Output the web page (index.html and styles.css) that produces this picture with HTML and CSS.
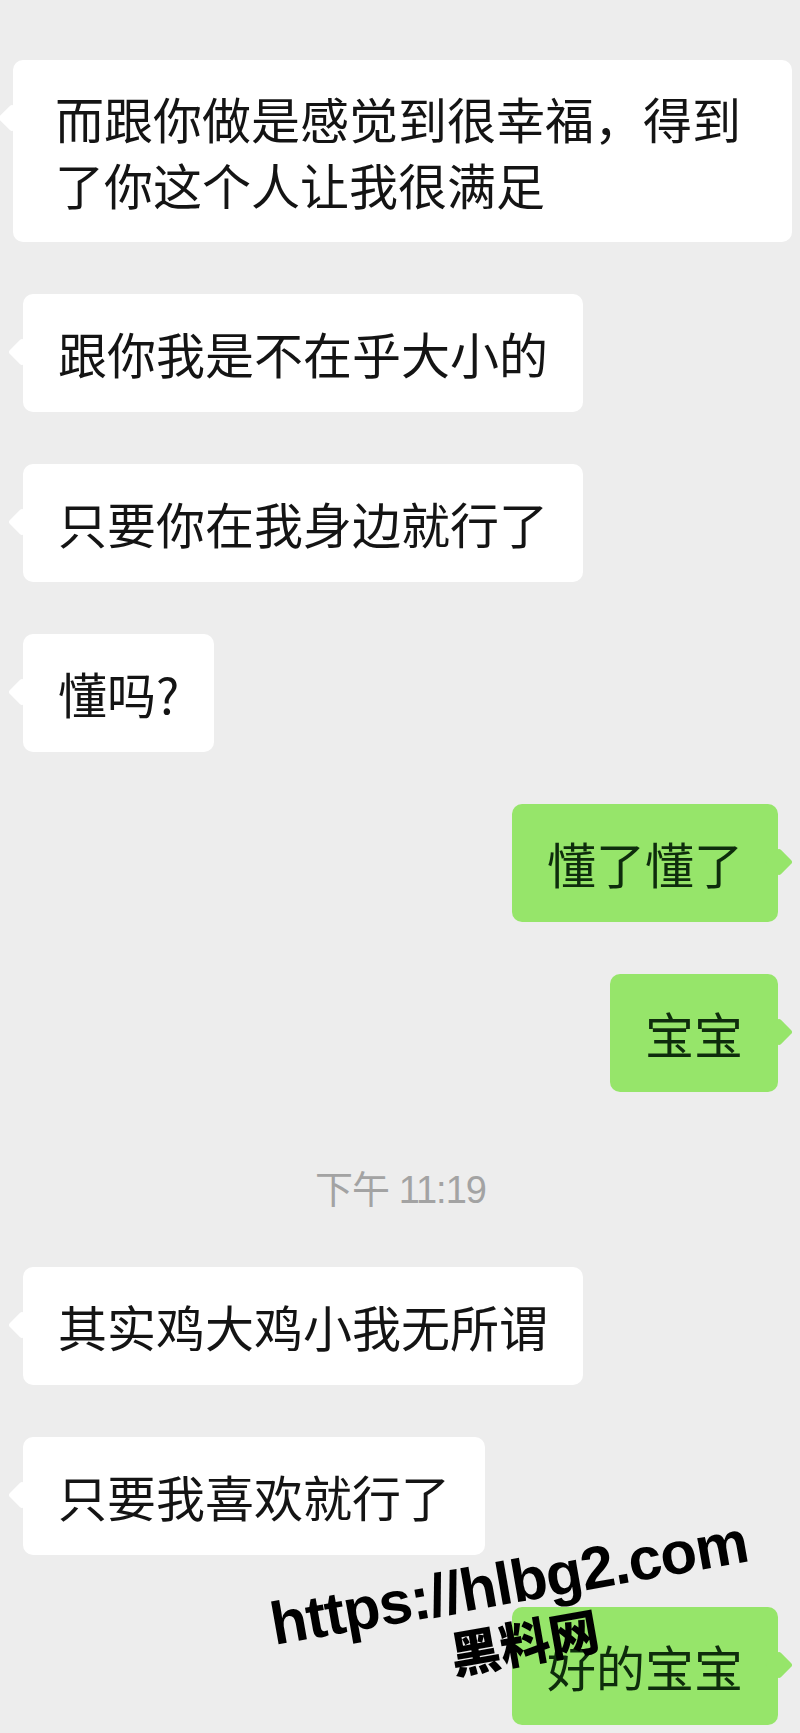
FILE: index.html
```html
<!DOCTYPE html>
<html lang="zh-CN">
<head>
    <meta charset="UTF-8">
    <meta name="viewport" content="width=device-width, initial-scale=1.0">
    <title>聊天记录</title>
    <link rel="stylesheet" href="styles.css">
</head>
<body>

    <div class="chat">
        <div class="row left">
            <div class="bubble wide">而跟你做是感觉到很幸福，得到了你这个人让我很满足</div>
        </div>
        <div class="row left">
            <div class="bubble">跟你我是不在乎大小的</div>
        </div>
        <div class="row left">
            <div class="bubble">只要你在我身边就行了</div>
        </div>
        <div class="row left">
            <div class="bubble">懂吗?</div>
        </div>
        <div class="row right">
            <div class="bubble mine">懂了懂了</div>
        </div>
        <div class="row right">
            <div class="bubble mine">宝宝</div>
        </div>

        <div class="time">下午 11:19</div>

        <div class="row left">
            <div class="bubble">其实鸡大鸡小我无所谓</div>
        </div>
        <div class="row left">
            <div class="bubble">只要我喜欢就行了</div>
        </div>
        <div class="row right">
            <div class="bubble mine">好的宝宝</div>
        </div>

        <div class="watermark">
            <span class="wm-url">https://hlbg2.com</span>
            <span class="wm-name">黑料网</span>
        </div>
    </div>

</body>
</html>
```

FILE: styles.css
```css
:root {
    --bg-color: #ededed;
    --white-bubble: #ffffff;
    --green-bubble: #96e56a;
    --text-color: #141414;
    --mine-text: #0e2c0c;
    --time-color: #a3a3a3;
}
* { margin: 0; padding: 0; box-sizing: border-box; }
body {
    background: var(--bg-color);
    font-family: "Noto Sans CJK SC", sans-serif;
    color: var(--text-color);
}
.chat {
    position: relative;
    height: 1733px;
    overflow: hidden;
    padding: 60px 22px 0 23px;
    display: flex;
    flex-direction: column;
    gap: 52px;
}
.row { display: flex; }
.row.right { justify-content: flex-end; }

.bubble {
    position: relative;
    max-width: 700px;
    padding: 26px 35px;
    background: var(--white-bubble);
    border-radius: 10px;
    font-size: 49px;
    line-height: 66px;
}
/* little tail next to the first line */
.bubble::before {
    content: "";
    position: absolute;
    top: 48px;
    left: -11px;
    width: 20px;
    height: 20px;
    background: inherit;
    border-radius: 3px;
    transform: rotate(45deg);
}
.bubble.wide { margin: 0 -14px 0 -10px; max-width: 779px; padding: 25px 42px; }
.bubble.mine { background: var(--green-bubble); color: var(--mine-text); }
.bubble.mine::before { left: auto; right: -11px; }

.time {
    padding-top: 21px;
    text-align: center;
    font-family: "Liberation Sans", "Noto Sans CJK SC", sans-serif;
    font-size: 38px;
    line-height: 50px;
    letter-spacing: -1px;
    color: var(--time-color);
}

.watermark {
    position: absolute;
    left: 254px;
    top: 1553px;
    width: 520px;
    text-align: center;
    color: #000;
    transform: rotate(-10deg);
}
.wm-url { display: block; font: 700 60px/59px "Liberation Sans", sans-serif; letter-spacing: -1px; }
.wm-name { display: block; padding-left: 10px; font: 900 50px/59px "Noto Sans CJK SC", sans-serif; }
```
